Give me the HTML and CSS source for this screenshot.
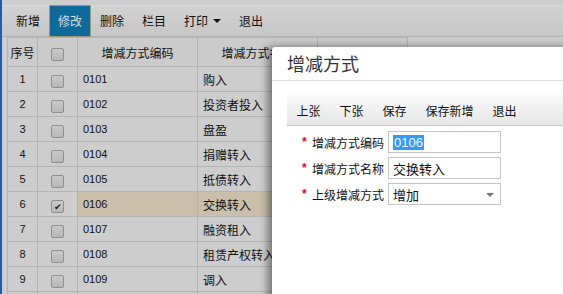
FILE: index.html
```html
<!DOCTYPE html>
<html>
<head>
<meta charset="utf-8">
<link rel="stylesheet" href="styles.css">
</head>
<body>
<div class="app">
  <div class="main">
    <div class="toolbar">
      <span class="tbtn">新增</span>
      <span class="tbtn active">修改</span>
      <span class="tbtn">删除</span>
      <span class="tbtn">栏目</span>
      <span class="tbtn">打印 <i class="caret"></i></span>
      <span class="tbtn">退出</span>
    </div>
    <table class="grid">
      <colgroup><col class="c1"><col class="c2"><col class="c3"><col class="c4"><col class="c5"></colgroup>
      <thead>
        <tr><th>序号</th><th><span class="cb"></span></th><th>增减方式编码</th><th>增减方式名称</th><th></th></tr>
      </thead>
      <tbody>
        <tr><td class="n">1</td><td class="ck"><span class="cb"></span></td><td class="code">0101</td><td>购入</td><td></td></tr>
        <tr><td class="n">2</td><td class="ck"><span class="cb"></span></td><td class="code">0102</td><td>投资者投入</td><td></td></tr>
        <tr><td class="n">3</td><td class="ck"><span class="cb"></span></td><td class="code">0103</td><td>盘盈</td><td></td></tr>
        <tr><td class="n">4</td><td class="ck"><span class="cb"></span></td><td class="code">0104</td><td>捐赠转入</td><td></td></tr>
        <tr><td class="n">5</td><td class="ck"><span class="cb"></span></td><td class="code">0105</td><td>抵债转入</td><td></td></tr>
        <tr class="sel"><td class="n">6</td><td class="ck"><span class="cb on">&#10004;</span></td><td class="code">0106</td><td>交换转入</td><td></td></tr>
        <tr><td class="n">7</td><td class="ck"><span class="cb"></span></td><td class="code">0107</td><td>融资租入</td><td></td></tr>
        <tr><td class="n">8</td><td class="ck"><span class="cb"></span></td><td class="code">0108</td><td>租赁产权转入</td><td></td></tr>
        <tr><td class="n">9</td><td class="ck"><span class="cb"></span></td><td class="code">0109</td><td>调入</td><td></td></tr>
        <tr><td class="n"></td><td class="ck"></td><td class="code"></td><td></td><td></td></tr>
      </tbody>
    </table>
  </div>
  <div class="modal">
    <div class="mtitle">增减方式</div>
    <div class="mbar">
      <span class="mbtn">上张</span>
      <span class="mbtn">下张</span>
      <span class="mbtn">保存</span>
      <span class="mbtn">保存新增</span>
      <span class="mbtn">退出</span>
    </div>
    <div class="form">
      <div class="frow"><span class="req">*</span><label>增减方式编码</label><div class="field"><span class="hl">0106</span></div></div>
      <div class="frow"><span class="req">*</span><label>增减方式名称</label><div class="field">交换转入</div></div>
      <div class="frow"><span class="req">*</span><label>上级增减方式</label><div class="field select">增加<i class="arrow"></i></div></div>
    </div>
  </div>
</div>
</body>
</html>
```
FILE: styles.css
```css
html, body {
  margin: 0;
  padding: 0;
  width: 563px;
  height: 294px;
  overflow: hidden;
  font-family: "Noto Sans CJK SC", "Liberation Sans", sans-serif;
  font-size: 12px;
  color: #111;
}
.app {
  position: relative;
  width: 563px;
  height: 294px;
  overflow: hidden;
  background: #cdcdcd;
  border-left: 2px solid #2a57a8;
  box-sizing: border-box;
}
.main {
  display: flex;
  flex-direction: column;
}
.toolbar {
  display: flex;
  align-items: stretch;
  margin-top: 5px;
  height: 30px;
  padding-left: 5px;
  border-top: 1px solid #dadada;
  border-bottom: 1px solid #b2b2b2;
  background: linear-gradient(#d2d2d2, #c6c6c6);
  gap: 0;
}
.tbtn {
  display: flex;
  align-items: center;
  padding: 0 8px;
  border: 1px solid transparent;
  line-height: 1;
  font-size: 12px;
  color: #111;
}
.tbtn.active {
  background: #0d6a9b;
  border-color: #a09670;
  color: #d8dde0;
  margin-top: -1px;
  margin-bottom: -1px;
}
.caret {
  display: inline-block;
  width: 0;
  height: 0;
  margin-left: 5px;
  border-left: 4px solid transparent;
  border-right: 4px solid transparent;
  border-top: 4px solid #111;
}
.grid {
  border-collapse: collapse;
  table-layout: fixed;
  width: 400px;
  margin-left: 5px;
}
.grid col.c1 { width: 30px; }
.grid col.c2 { width: 40px; }
.grid col.c3 { width: 120px; }
.grid col.c4 { width: 120px; }
.grid col.c5 { width: 90px; }
.grid th, .grid td {
  border: 1px solid #b3b3b3;
  padding: 0;
  height: 24px;
  white-space: nowrap;
  overflow: hidden;
}
.grid th {
  height: 28px;
  font-weight: normal;
  text-align: center;
  background: #cbcbcb;
}
.grid td { background: #cdcdcd; }
.grid td.n { text-align: center; font-family: "Liberation Sans", sans-serif; font-size: 11px; }
.grid td.ck { text-align: center; }
.grid td.code { padding-left: 5px; font-family: "Liberation Sans", sans-serif; font-size: 11px; }
.grid td:nth-child(4) { padding-left: 5px; }
.grid tr.sel td.code, .grid tr.sel td:nth-child(4), .grid tr.sel td:nth-child(5) { background: #cbbfa9; }
.cb {
  display: inline-flex;
  align-items: center;
  justify-content: center;
  width: 11px;
  height: 11px;
  border: 1px solid #8f8f8f;
  border-radius: 2px;
  background: linear-gradient(#c9c9c9, #b8b8b8);
  vertical-align: middle;
  font-size: 9px;
  line-height: 1;
  color: #222;
}
.modal {
  position: absolute;
  left: 270px;
  top: 47px;
  width: 300px;
  height: 260px;
  background: #fff;
  border-top-left-radius: 3px;
  box-shadow: -4px 0 9px rgba(0,0,0,0.45);
  padding-left: 15px;
  box-sizing: border-box;
}
.mtitle {
  height: 33px;
  line-height: 33px;
  font-size: 18px;
  color: #333;
  margin-left: -15px;
  padding-left: 15px;
  border-bottom: 1px solid #dedede;
}
.mbar {
  margin-top: 14px;
  height: 30px;
  display: flex;
  align-items: center;
  background: linear-gradient(#fafafa, #e6e6e6);
  border-bottom: 1px solid #c8c8c8;
}
.mbtn {
  padding: 0 9.5px;
  color: #111;
}
.form {
  display: flex;
  flex-direction: column;
  gap: 4px;
  padding-top: 5px;
  padding-left: 15px;
}
.frow {
  display: flex;
  align-items: center;
  height: 22px;
}
.req {
  width: 10px;
  color: #e3002b;
  font-family: "Liberation Sans", sans-serif;
  font-size: 12px;
  font-weight: bold;
}
.frow label {
  width: 76px;
  color: #111;
}
.field {
  position: relative;
  box-sizing: border-box;
  width: 113px;
  height: 22px;
  border: 1px solid #c6c6c6;
  padding-left: 4px;
  display: flex;
  align-items: center;
  font-size: 13px;
  color: #111;
}
.hl {
  background: #3399ff;
  color: #fff;
  font-family: "Liberation Sans", sans-serif;
  font-size: 13px;
  padding: 0 1px;
}
.arrow {
  position: absolute;
  right: 6px;
  top: 9px;
  width: 0;
  height: 0;
  border-left: 4px solid transparent;
  border-right: 4px solid transparent;
  border-top: 4px solid #777;
}
```
